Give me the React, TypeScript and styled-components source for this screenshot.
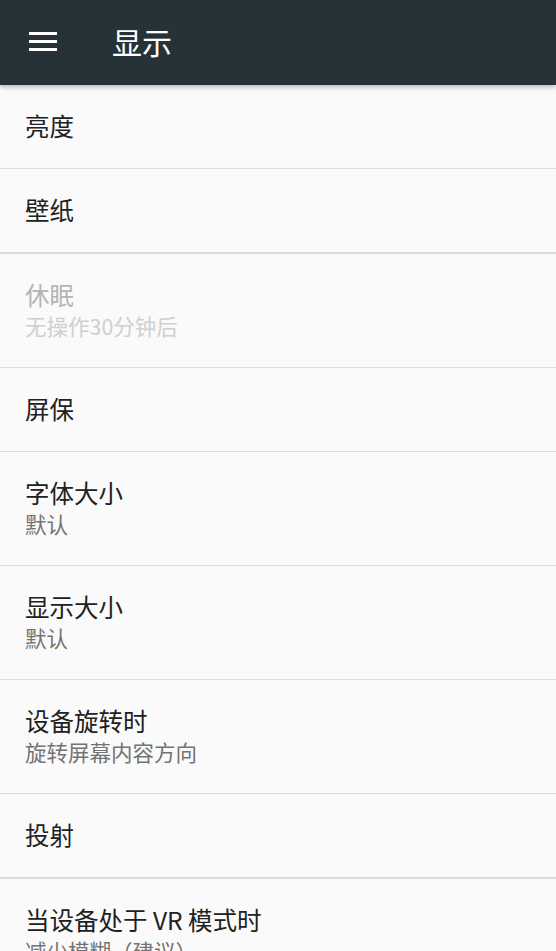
import React from "react";
import styled, { createGlobalStyle } from "styled-components";

const GlobalStyle = createGlobalStyle`
  html, body {
    margin: 0;
    padding: 0;
    background: #fafafa;
    font-family: "Noto Sans CJK SC", "Noto Sans", Roboto, sans-serif;
  }
`;

const SPage = styled.div`
  width: 556px;
  height: 951px;
  overflow: hidden;
  background: #fafafa;
`;

const SToolbar = styled.header`
  position: relative;
  z-index: 1;
  height: 85px;
  display: flex;
  align-items: center;
  background-color: #263238;
  box-shadow: 0 2px 5px rgba(0, 0, 0, 0.28);
`;

const SMenuButton = styled.div`
  width: 28px;
  margin-left: 29px;
  margin-top: -2px;
  display: flex;
  flex-direction: column;
  gap: 5px;
  span {
    display: block;
    height: 3px;
    background: #ffffff;
  }
`;

const STitle = styled.h1`
  margin: -3px 0 0 55px;
  font-size: 30px;
  font-weight: 400;
  color: #ffffff;
  line-height: 1;
`;

const SList = styled.ul`
  list-style: none;
  margin: 0;
  padding: 0;
`;

const SItem = styled.li<{ $groupEnd?: boolean }>`
  display: flex;
  flex-direction: column;
  padding: 25px 25px 26px;
  min-height: 32px;
  border-bottom: ${({ $groupEnd }) => ($groupEnd ? "2px solid #dcdcdc" : "1px solid #dedede")};
`;

const SItemTitle = styled.div<{ $disabled?: boolean }>`
  font-size: 24.5px;
  line-height: 32px;
  color: ${({ $disabled }) => ($disabled ? "#b4b4b4" : "#212121")};
`;

const SItemSummary = styled.div<{ $disabled?: boolean }>`
  font-size: 21.5px;
  line-height: 30px;
  color: ${({ $disabled }) => ($disabled ? "#cfcfcf" : "#737373")};
`;

interface Pref {
  title: string;
  summary?: string;
  disabled?: boolean;
  groupEnd?: boolean;
}

const prefs: Pref[] = [
  { title: "亮度" },
  { title: "壁纸", groupEnd: true },
  { title: "休眠", summary: "无操作30分钟后", disabled: true },
  { title: "屏保" },
  { title: "字体大小", summary: "默认" },
  { title: "显示大小", summary: "默认" },
  { title: "设备旋转时", summary: "旋转屏幕内容方向" },
  { title: "投射", groupEnd: true },
  { title: "当设备处于 VR 模式时", summary: "减少模糊（建议）" },
];

export default function App() {
  return (
    <SPage>
      <GlobalStyle />
      <SToolbar>
        <SMenuButton>
          <span />
          <span />
          <span />
        </SMenuButton>
        <STitle>显示</STitle>
      </SToolbar>
      <SList>
        {prefs.map((p) => (
          <SItem key={p.title} $groupEnd={p.groupEnd}>
            <SItemTitle $disabled={p.disabled}>{p.title}</SItemTitle>
            {p.summary && <SItemSummary $disabled={p.disabled}>{p.summary}</SItemSummary>}
          </SItem>
        ))}
      </SList>
    </SPage>
  );
}
